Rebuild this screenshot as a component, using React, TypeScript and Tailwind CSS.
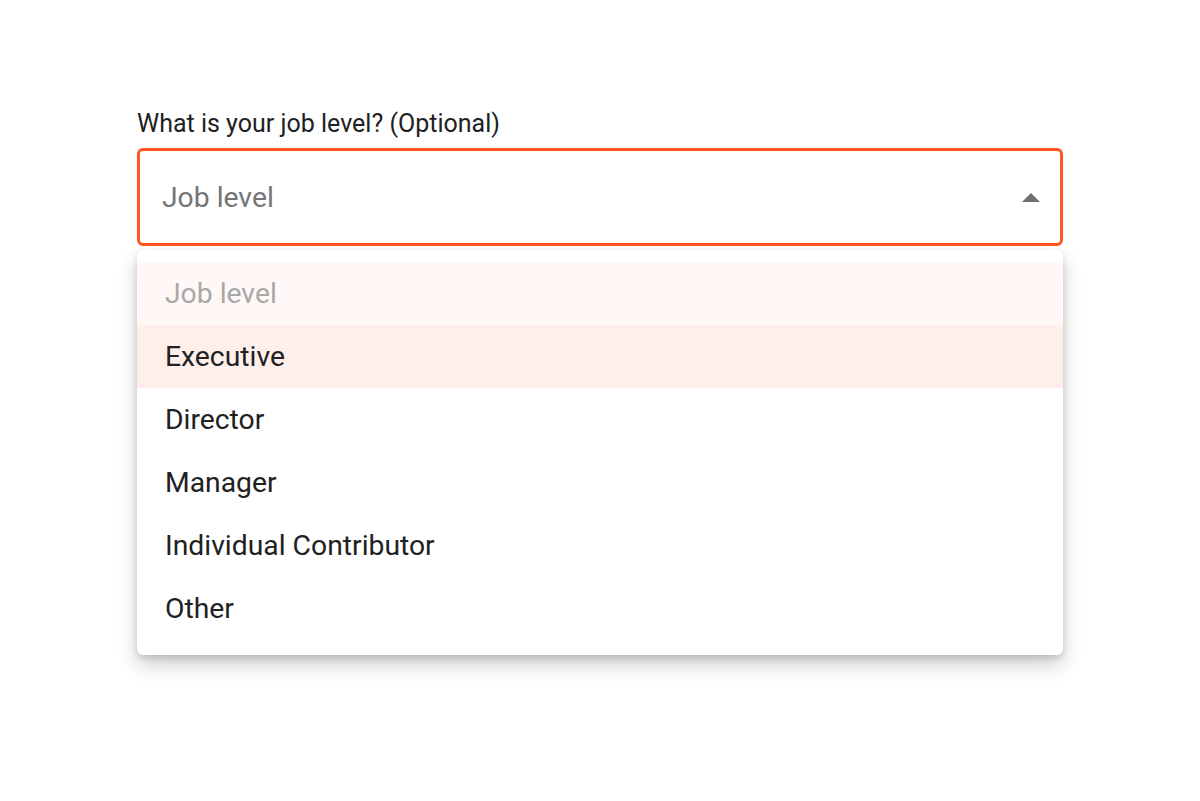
const options = ["Executive", "Director", "Manager", "Individual Contributor", "Other"];

export default function App() {
  return (
    <div className="min-h-[801px] w-full bg-white font-['Roboto',sans-serif]">
      <div className="mx-auto w-[926px] pt-[109px]">
        <label className="block text-[25px] leading-[30px] text-[#212121]">What is your job level? (Optional)</label>
        <div className="mt-[9px] flex h-[98px] items-center justify-between rounded-[6px] border-[3px] border-[#ff5722] pl-[22px] pr-[20px]">
          <span className="pt-[2px] text-[28.3px] text-[#757575]">Job level</span>
          <svg width="18" height="9" viewBox="0 0 18 9">
            <path d="M0 9 L9 0 L18 9 Z" fill="#707070" />
          </svg>
        </div>
        <div className="mt-[4px] rounded-[6px] bg-white pt-[12px] pb-[15px] shadow-[0_10px_20px_rgba(0,0,0,0.2),0_3px_6px_rgba(0,0,0,0.12)]">
          <div className="flex h-[63px] items-center bg-[#fff8f6] px-[28px] pt-[1px] text-[28.3px] text-[#a8a8a8]">Job level</div>
          {options.map((o, i) => (
            <div
              key={o}
              className={`flex h-[63px] items-center px-[28px] pt-[1px] text-[28.3px] text-[#212121] ${i === 0 ? "bg-[#feefeb]" : ""}`}
            >
              {o}
            </div>
          ))}
        </div>
      </div>
    </div>
  );
}
